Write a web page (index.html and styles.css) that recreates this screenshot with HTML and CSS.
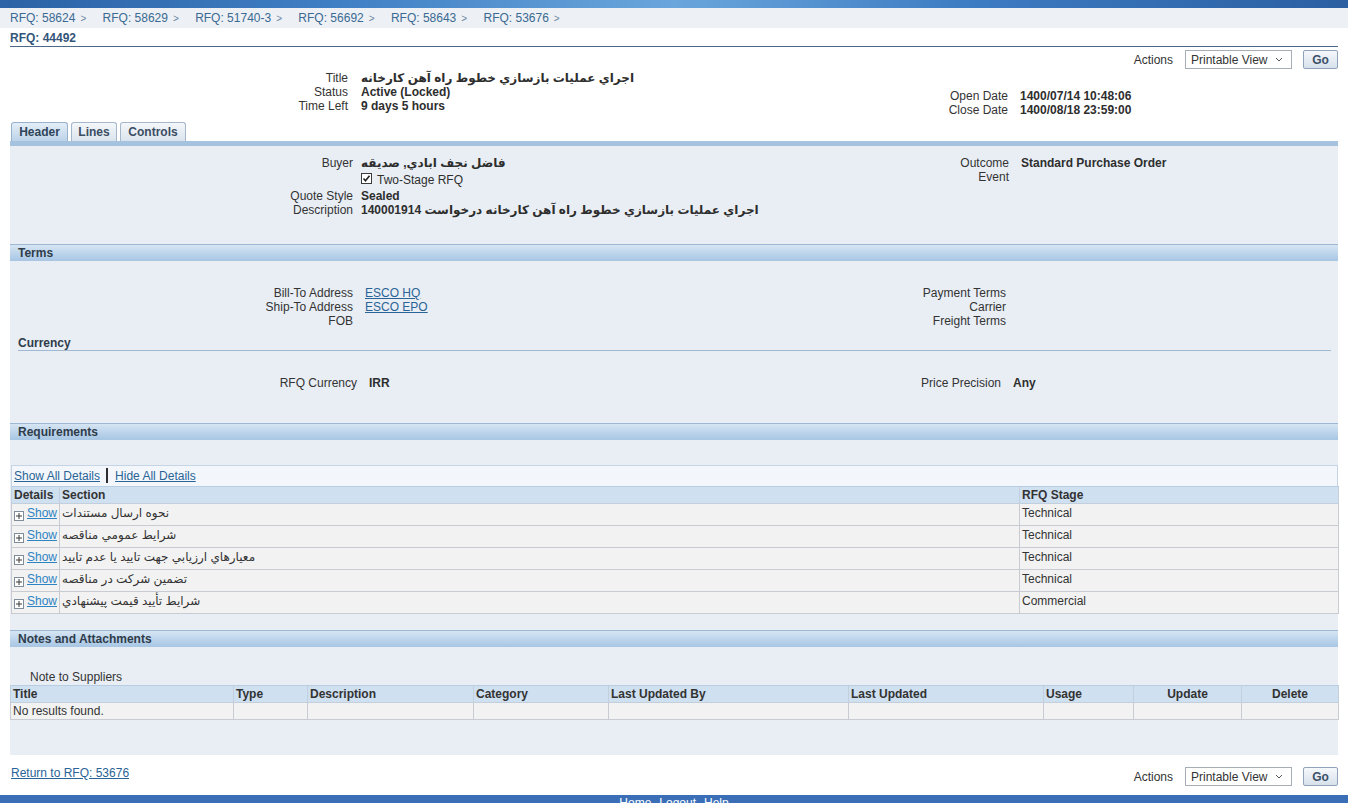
FILE: index.html
```html
<!DOCTYPE html>
<html>
<head>
<meta charset="utf-8">
<title>RFQ: 44492</title>
<link rel="stylesheet" href="styles.css">
</head>
<body>
<div class="topbar"></div>
<div class="crumbs">
  <a class="crumb">RFQ: 58624</a><span class="sep">&gt;</span>
  <a class="crumb">RFQ: 58629</a><span class="sep">&gt;</span>
  <a class="crumb">RFQ: 51740-3</a><span class="sep">&gt;</span>
  <a class="crumb">RFQ: 56692</a><span class="sep">&gt;</span>
  <a class="crumb">RFQ: 58643</a><span class="sep">&gt;</span>
  <a class="crumb">RFQ: 53676</a><span class="sep">&gt;</span>
</div>
<div class="pagetitle"><h1>RFQ: 44492</h1></div>
<div class="actrow top">
  <div class="actions">
    <span class="act-label">Actions</span>
    <div class="select"><span>Printable View</span><svg width="8" height="5" viewBox="0 0 8 5"><path d="M1 1l3 3 3-3" fill="none" stroke="#555" stroke-width="1"/></svg></div>
    <button class="go">Go</button>
  </div>
</div>
<div class="info">
  <div class="col g-info-l">
    <div class="row"><span class="lbl">Title</span><span class="val">اجراي عمليات بازسازي خطوط راه آهن كارخانه</span></div>
    <div class="row"><span class="lbl">Status</span><span class="val">Active (Locked)</span></div>
    <div class="row"><span class="lbl">Time Left</span><span class="val">9 days 5 hours</span></div>
  </div>
  <div class="col g-info-r">
    <div class="row"><span class="lbl">Open Date</span><span class="val">1400/07/14 10:48:06</span></div>
    <div class="row"><span class="lbl">Close Date</span><span class="val">1400/08/18 23:59:00</span></div>
  </div>
</div>
<div class="tabs">
  <div class="tab sel w-header">Header</div>
  <div class="tab w-lines">Lines</div>
  <div class="tab w-controls">Controls</div>
</div>
<div class="tabline"></div>
<div class="panel">
  <div class="fields hdr">
    <div class="col g-hdr-l">
      <div class="row"><span class="lbl">Buyer</span><span class="val">فاضل نجف ابادي, صديقه</span></div>
      <div class="row cbrow"><span class="lbl"></span><span class="val plain"><span class="checkbox"><svg width="9" height="9" viewBox="0 0 9 9"><path d="M1.5 4.5l2 2.2 4-5" fill="none" stroke="#222" stroke-width="1.6"/></svg></span>Two-Stage RFQ</span></div>
      <div class="row"><span class="lbl">Quote Style</span><span class="val">Sealed</span></div>
      <div class="row"><span class="lbl">Description</span><span class="val">اجراي عمليات بازسازي خطوط راه آهن كارخانه درخواست 140001914</span></div>
    </div>
    <div class="col g-hdr-r">
      <div class="row"><span class="lbl">Outcome</span><span class="val">Standard Purchase Order</span></div>
      <div class="row"><span class="lbl">Event</span><span class="val"></span></div>
    </div>
  </div>

  <div class="sbar terms">Terms</div>
  <div class="fields trm">
    <div class="col g-trm-l">
      <div class="row"><span class="lbl">Bill-To Address</span><span class="val plain"><a>ESCO HQ</a></span></div>
      <div class="row"><span class="lbl">Ship-To Address</span><span class="val plain"><a>ESCO EPO</a></span></div>
      <div class="row"><span class="lbl">FOB</span><span class="val"></span></div>
    </div>
    <div class="col g-trm-r">
      <div class="row"><span class="lbl">Payment Terms</span><span class="val"></span></div>
      <div class="row"><span class="lbl">Carrier</span><span class="val"></span></div>
      <div class="row"><span class="lbl">Freight Terms</span><span class="val"></span></div>
    </div>
  </div>
  <div class="subhead">Currency</div>
  <div class="fields cur">
    <div class="col g-cur-l">
      <div class="row"><span class="lbl">RFQ Currency</span><span class="val">IRR</span></div>
    </div>
    <div class="col g-cur-r">
      <div class="row"><span class="lbl">Price Precision</span><span class="val">Any</span></div>
    </div>
  </div>

  <div class="sbar reqs">Requirements</div>
  <div class="reqtable">
    <div class="controlbar"><a>Show All Details</a><span class="vsep"></span><a>Hide All Details</a></div>
    <table class="grid req">
      <thead>
        <tr><th class="c-det">Details</th><th class="c-sec">Section</th><th class="c-stage">RFQ Stage</th></tr>
      </thead>
      <tbody>
        <tr><td><span class="plus"></span><a class="show">Show</a></td><td>نحوه ارسال مستندات</td><td>Technical</td></tr>
        <tr><td><span class="plus"></span><a class="show">Show</a></td><td>شرايط عمومي مناقصه</td><td>Technical</td></tr>
        <tr><td><span class="plus"></span><a class="show">Show</a></td><td>معيارهاي ارزيابي جهت تاييد يا عدم تاييد</td><td>Technical</td></tr>
        <tr><td><span class="plus"></span><a class="show">Show</a></td><td>تضمين شركت در مناقصه</td><td>Technical</td></tr>
        <tr><td><span class="plus"></span><a class="show">Show</a></td><td>شرايط تأييد قيمت پيشنهادي</td><td>Commercial</td></tr>
      </tbody>
    </table>
  </div>

  <div class="sbar notes">Notes and Attachments</div>
  <div class="notelabel">Note to Suppliers</div>
  <table class="grid att">
    <thead>
      <tr>
        <th class="a-title">Title</th><th class="a-type">Type</th><th class="a-desc">Description</th><th class="a-cat">Category</th><th class="a-by">Last Updated By</th><th class="a-upd">Last Updated</th><th class="a-use">Usage</th><th class="a-edit ctr">Update</th><th class="a-del ctr">Delete</th>
      </tr>
    </thead>
    <tbody>
      <tr><td>No results found.</td><td></td><td></td><td></td><td></td><td></td><td></td><td></td><td></td></tr>
    </tbody>
  </table>
</div>
<div class="bottomrow">
  <a class="return">Return to RFQ: 53676</a>
  <div class="actions bottom">
    <span class="act-label">Actions</span>
    <div class="select"><span>Printable View</span><svg width="8" height="5" viewBox="0 0 8 5"><path d="M1 1l3 3 3-3" fill="none" stroke="#555" stroke-width="1"/></svg></div>
    <button class="go">Go</button>
  </div>
</div>
<div class="footer"><a>Home</a><a>Logout</a><a>Help</a></div>
</body>
</html>
```

FILE: styles.css
```css
* { box-sizing: border-box; }
html, body { margin: 0; padding: 0; height: 803px; overflow: hidden; }
body {
  font-family: "Liberation Sans", "DejaVu Sans", Arial, sans-serif;
  font-size: 12px;
  color: #333;
  background: #fff;
}
a { color: #2a6496; text-decoration: underline; cursor: pointer; }

.topbar {
  height: 8px;
  background: linear-gradient(90deg, #2c62a6 0%, #3f7fc4 25%, #6aa6dc 50%, #3d7bc2 72%, #2b5fa2 100%);
}
.crumbs {
  height: 20px;
  line-height: 20px;
  padding-left: 10px;
  background: #edf0f5;
  white-space: nowrap;
}
.crumb { color: #3a6a92; text-decoration: none; }
.sep { color: #6a86a2; font-size: 10px; margin: 0 13px 0 5px; }

.pagetitle { margin: 0 10px; height: 19px; border-bottom: 1px solid #4b6888; }
.pagetitle h1 { margin: 0; font-size: 12px; line-height: 20px; color: #34557a; font-weight: bold; }

.actrow { height: 23px; padding: 3px 10px 0 0; display: flex; justify-content: flex-end; }
.actions { display: flex; align-items: center; height: 19px; }
.act-label { margin-right: 12px; }
.select {
  width: 107px; height: 19px; border: 1px solid #a7adb5; background: #fff;
  display: flex; align-items: center; justify-content: space-between; padding: 0 8px 0 5px;
}
.go {
  margin-left: 11px; width: 35px; height: 19px; padding: 0;
  border: 1px solid #8fa4ba; border-radius: 2px;
  background: linear-gradient(#f6f8fb, #d7e1eb);
  font: bold 12px "Liberation Sans", Arial, sans-serif; color: #3c5069;
}

.info { display: flex; height: 52px; }
.col { flex: none; }
.row { display: flex; line-height: 14px; white-space: nowrap; }
.lbl { flex: none; text-align: right; }
.val { font-weight: bold; color: #2e2e2e; }
.val.plain { font-weight: normal; }

.g-info-l { width: 670px; padding: 1px 0 0 10px; }
.g-info-l .lbl { width: 338px; margin-right: 13px; }
.g-info-r { padding-top: 19px; }
.g-info-r .lbl { width: 338px; margin-right: 12px; }

.tabs { display: flex; gap: 3px; margin-left: 11px; height: 19px; }
.tab {
  height: 19px; line-height: 18px; text-align: center; font-weight: bold; color: #3a4d63;
  border: 1px solid #a5b8cb; border-bottom: none; border-radius: 3px 3px 0 0;
  background: linear-gradient(#f4f7fa, #dbe4ed);
}
.tab.sel { background: linear-gradient(#e4eef8, #bcd3e9); border-color: #98b2cc; color: #2f4359; }
.w-header { width: 57px; }
.w-lines { width: 46px; }
.w-controls { width: 66px; }
.tabline { height: 5px; margin: 0 10px; background: #a5c3df; }

.panel { margin: 0 10px; height: 609px; background: #e9eef5; }
.fields { display: flex; }
.fields.hdr { padding-top: 10px; height: 71px; }
.g-hdr-l { width: 660px; }
.g-hdr-l .lbl { width: 343px; margin-right: 8px; }
.g-hdr-r .lbl { width: 339px; margin-right: 12px; }
.cbrow { margin-top: 1px; line-height: 18px; }
.checkbox {
  display: inline-block; width: 11px; height: 11px; border: 1px solid #3a3a3a; background: #fff;
  vertical-align: -1px; margin-right: 5px; position: relative; top: -1px;
}
.checkbox svg { display: block; }

.sbar {
  height: 17px; line-height: 16px; padding-left: 8px; font-weight: bold; color: #2f3c4a;
  border-top: 1px solid #9db8d3;
  background: linear-gradient(#d6e5f3, #b9d2ea 60%, #a7c6e4);
}
.sbar.terms { margin-top: 27px; }
.fields.trm { margin-top: 25px; }
.g-trm-l { width: 660px; }
.g-trm-l .lbl { width: 343px; margin-right: 12px; }
.g-trm-r .lbl { width: 336px; }

.subhead {
  margin: 8px 7px 0 8px; height: 15px; line-height: 14px; font-weight: bold; color: #2f3c4a;
  border-bottom: 1px solid #9fb9d3;
}
.fields.cur { margin-top: 25px; }
.g-cur-l { width: 660px; }
.g-cur-l .lbl { width: 347px; margin-right: 12px; }
.g-cur-r .lbl { width: 331px; margin-right: 12px; }

.sbar.reqs { margin-top: 33px; }
.reqtable { margin: 25px 0 0 1px; }
.controlbar {
  height: 21px; padding: 3px 0 0 2px; line-height: 14px;
  border: 1px solid #c6d5e5; border-bottom: none; background: #f3f7fb;
  display: flex; align-items: flex-start;
}
.vsep { display: inline-block; width: 2px; height: 15px; background: #2d2d2d; margin: -1px 7px 0 6px; }

table.grid { border-collapse: collapse; table-layout: fixed; }
table.grid th {
  text-align: left; font-weight: bold; color: #333; background: #cfe0f1;
  line-height: 14px; padding: 1px 2px; border: 1px solid #c3cfdc; border-top-color: #b9cde2;
}
table.grid td {
  line-height: 14px; padding: 2px 2px 5px; border: 1px solid #c8cbd2; background: #f2f2f2;
  vertical-align: top; white-space: nowrap;
}
table.req { width: 1327px; }
.c-det { width: 48px; }
.c-sec { width: 960px; }
.c-stage { width: 319px; }
table.req td:first-child { padding-left: 2px; }
.plus {
  display: inline-block; width: 10px; height: 10px; border: 1px solid #7f8c99; background: #fff;
  vertical-align: top; margin-right: 3px; position: relative; top: 5px;
}
.plus::before { content: ""; position: absolute; left: 1px; top: 3px; width: 6px; height: 2px; background: #3a3a3a; transform: scaleY(0.5); }
.plus::after { content: ""; position: absolute; left: 3px; top: 1px; width: 2px; height: 6px; background: #3a3a3a; transform: scaleX(0.5); }
.show { color: #2e83c3; }

.sbar.notes { margin-top: 16px; }
.notelabel { margin-top: 23px; padding-left: 20px; line-height: 15px; height: 15px; }
table.att { width: 1328px; }
table.att td { padding: 1px 2px; }
.a-title { width: 223px; }
.a-type { width: 74px; }
.a-desc { width: 166px; }
.a-cat { width: 135px; }
.a-by { width: 240px; }
.a-upd { width: 195px; }
.a-use { width: 90px; }
.a-edit { width: 108px; }
.a-del { width: 97px; }
table.grid th.ctr { text-align: center; }

.bottomrow { height: 40px; padding: 11px 10px 0 11px; display: flex; justify-content: space-between; align-items: flex-start; }
.return { line-height: 14px; color: #2a6496; }
.actions.bottom { margin-top: 1px; }

.footer {
  height: 8px; overflow: hidden; background: #3a6fb8; text-align: center;
  padding-top: 2px; line-height: 12px;
}
.footer a { color: #fff; text-decoration: none; margin: 0 4px; }
```
